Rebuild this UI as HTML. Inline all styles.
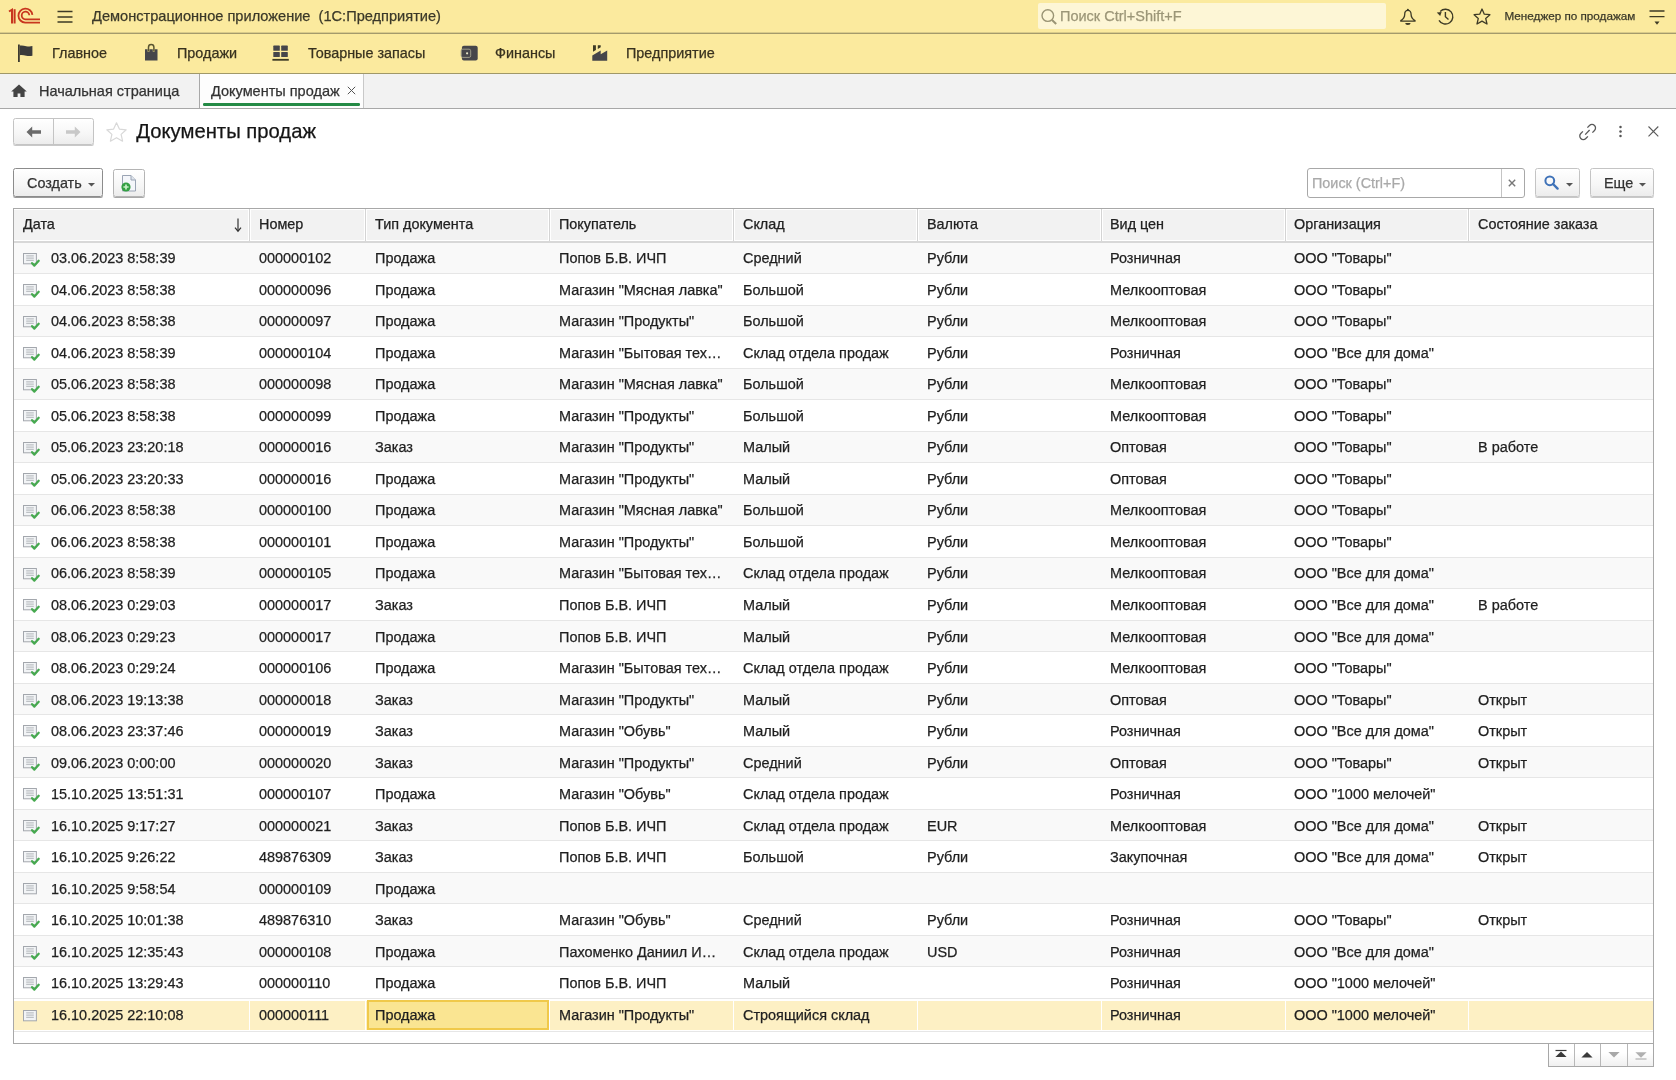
<!DOCTYPE html>
<html><head><meta charset="utf-8">
<style>
*{box-sizing:border-box;margin:0;padding:0}
html,body{width:1676px;height:1080px;overflow:hidden;background:#fff;font-family:"Liberation Sans",sans-serif;color:#333}
#wrap{position:absolute;left:0;top:0;width:1676px;height:1080px;will-change:transform}
.abs{position:absolute}
#top{position:absolute;left:0;top:0;width:1676px;height:34px;background:#fbea9e;border-bottom:1px solid #a39a6c;box-shadow:inset 0 -1px 0 #d9cb8a}
#sect{position:absolute;left:0;top:34px;width:1676px;height:40px;background:#fbea9e;border-bottom:1px solid #a09868}
#tabs{position:absolute;left:0;top:74px;width:1676px;height:35px;background:#f2f2f2;border-bottom:1px solid #a8a8a8}
.lbl{position:absolute;white-space:nowrap;line-height:20px}
.sec{font-size:14.4px;color:#38321f;top:9px}
.tab{font-size:14.5px;color:#333}
svg{position:absolute;overflow:visible}
#title{position:absolute;left:136.3px;top:118px;font-size:20.25px;color:#151515;line-height:26px;white-space:nowrap}
.btn{position:absolute;border:1px solid #b8b8b8;border-radius:2.5px;background:linear-gradient(#fff,#f6f6f6 60%,#ececec);box-shadow:0 1px 0 #c8c8c8}
#grid{position:absolute;left:13px;top:208px;width:1641px;height:836px;border:1px solid #a8a8a8;overflow:hidden;background:#fff}
.hbg{position:absolute;left:0;top:0;width:1640px;height:34px;background:#f2f2f2;border-top:1px solid #fff;border-bottom:2px solid #d8d8d8;box-shadow:inset 0 -1px 0 #fff}
.hdiv{position:absolute;top:0;width:3px;height:32px;background:#d4d4d4;border-left:1px solid #fff;border-right:1px solid #fff}
.ht{position:absolute;top:-1px;line-height:32px;font-size:14.4px;color:#222;white-space:nowrap}
.sortarr{position:absolute;top:-1px;line-height:32px;font-size:15px;color:#444}
.row{position:absolute;left:0;width:1640px;height:31.52px;border-bottom:1px solid #e6e6e6;background:#fff}
.row.odd{background:#f9f9f9}
.row.sel{background:#fff;height:32.6px}
.sc{position:absolute;top:2px;height:28.6px;background:#fdf0c4}
.sel .t{top:1.4px}
.sel .di{top:11px!important}
.selcell{position:absolute;top:1.5px;height:29.8px;background:#fae592;border:2px solid #f0c94a}
.t{position:absolute;top:0.8px;line-height:31px;font-size:14.45px;color:#1f1f1f;white-space:nowrap}
.lbl,#title,.t,.ht{-webkit-text-stroke:0.25px currentColor}
.di{position:absolute}
</style></head><body><div id="wrap">
<div id="top">
  <svg style="left:8px;top:8px" width="34" height="17" viewBox="0 0 34 17">
    <path d="M1 3.5l3-1.8v13.8" fill="none" stroke="#c8361e" stroke-width="2"/>
    <path d="M6.6 1.2v14.3" fill="none" stroke="#c8361e" stroke-width="2"/>
    <path d="M32 14.6H17.2A7 7 0 1 1 24.4 6.9" fill="none" stroke="#c8361e" stroke-width="1.8"/>
    <path d="M32 11.3H17.4A3.8 3.8 0 1 1 21.3 7.2" fill="none" stroke="#c8361e" stroke-width="1.8"/>
  </svg>
  <svg style="left:57px;top:10px" width="16" height="13" viewBox="0 0 16 13">
    <path d="M0.5 1.4h15M0.5 6.9h15M0.5 12h15" stroke="#3d3a25" stroke-width="1.5"/>
  </svg>
  <span class="lbl" style="left:92px;top:6px;font-size:14.6px;color:#3b3929">Демонстрационное приложение&nbsp; (1С:Предприятие)</span>
  <div class="abs" style="left:1038px;top:3px;width:348px;height:26px;background:#fdf6d6;border-radius:2px"></div>
  <svg style="left:1041px;top:9px" width="17" height="16" viewBox="0 0 17 16">
    <circle cx="6.8" cy="6.6" r="5.8" fill="none" stroke="#9a9474" stroke-width="1.4"/>
    <path d="M11 11l4.2 4" stroke="#9a9474" stroke-width="2"/>
  </svg>
  <span class="lbl" style="left:1060px;top:6px;font-size:14.5px;color:#9c9678">Поиск Ctrl+Shift+F</span>
  <svg style="left:1400px;top:8px" width="16" height="18" viewBox="0 0 16 18">
    <path d="M7.9 2.4C5.7 2.4 4.7 4.2 4.7 6.4c0 3-1.4 4.6-3.9 6.2v.6h14.2v-.6c-2.5-1.6-3.9-3.2-3.9-6.2 0-2.2-1-4-3.2-4z" fill="none" stroke="#3d3a25" stroke-width="1.3" stroke-linejoin="round"/>
    <circle cx="7.9" cy="1.8" r="1" fill="#3d3a25"/>
    <path d="M5.2 14.9h5.4a2.7 2 0 0 1-5.4 0z" fill="#3d3a25"/>
  </svg>
  <svg style="left:1436px;top:8px" width="19" height="18" viewBox="1436 8 19 18">
    <path d="M1440.2 11.4A7.4 7.4 0 1 1 1439 20.3" fill="none" stroke="#3d3a25" stroke-width="1.4"/>
    <path d="M1436.8 12.6l4.8-.6-1.4 4z" fill="#3d3a25"/>
    <path d="M1445.4 12.1v4.6l3.1 2.9" fill="none" stroke="#3d3a25" stroke-width="1.4"/>
  </svg>
  <svg style="left:1473px;top:8px" width="18" height="18" viewBox="0 0 18 18">
    <path d="M9 1l2.3 5.2 5.6.5-4.2 3.7 1.3 5.6L9 13.1 4 16l1.3-5.6L1.1 6.7l5.6-.5z" fill="none" stroke="#3d3a25" stroke-width="1.3" stroke-linejoin="round"/>
  </svg>
  <span class="lbl" style="left:1504.5px;top:6px;font-size:11.7px;color:#3b3929">Менеджер по продажам</span>
  <svg style="left:1649px;top:10px" width="17" height="16" viewBox="0 0 17 16">
    <path d="M0.5 1h15M0.5 6.6h15" stroke="#3d3a25" stroke-width="1.3"/>
    <path d="M5.5 11.4h5l-2.5 3.4z" fill="#3d3a25"/>
  </svg>
</div>
<div id="sect">
  <svg style="left:0;top:0" width="640" height="40" viewBox="0 34 640 40">
    <path d="M18.9 44.6v17.4" stroke="#3d3a30" stroke-width="1.8"/>
    <path d="M19.9 45.6c2.2-.5 4.3.2 6.3.6s4 .6 6.2-.1v9.6c-2.2.6-4.2.5-6.2.1s-4.1-1-6.3-.6z" fill="#3b3b3b"/>
    <path d="M145 49.3h2.6v2.4h1.8v-2.4h3.4v2.4h1.8v-2.4h2.9v11.3h-12.5z" fill="#45454a"/>
    <path d="M148.5 51.5v-4.3a2.7 2.7 0 0 1 5.4 0v4.3" fill="none" stroke="#5a5530" stroke-width="1.5"/>
    <rect x="273.3" y="45.6" width="6.5" height="5.2" rx="0.6" fill="#45454a"/>
    <rect x="281.2" y="45.6" width="6.6" height="5.2" rx="0.6" fill="#45454a"/>
    <rect x="273.3" y="52" width="6.5" height="5.1" rx="0.6" fill="#45454a"/>
    <rect x="281.2" y="52" width="6.6" height="5.1" rx="0.6" fill="#45454a"/>
    <rect x="272.4" y="58.9" width="16.4" height="1.8" fill="#3d3a25"/>
    <rect x="461.9" y="45.8" width="15.8" height="14.8" rx="2" fill="#46464a"/>
    <rect x="461.2" y="49.2" width="9.5" height="8.2" rx="1.6" fill="#46464a" stroke="#9c9a88" stroke-width="1"/>
    <circle cx="467.1" cy="53.3" r="1.1" fill="#e8e6c8"/>
    <path d="M593 45.3h2.9v4.6l-2.9 1.8zM597.8 45.3h2.9v1.9l-2.9 1.8z" fill="#3d3a25"/>
    <path d="M592.3 60.7V55.4l8.4-4.8v3.6l6.5-3.6v10.1z" fill="#45454a"/>
  </svg>
  <span class="lbl sec" style="left:52px">Главное</span>
  <span class="lbl sec" style="left:177px">Продажи</span>
  <span class="lbl sec" style="left:308px">Товарные запасы</span>
  <span class="lbl sec" style="left:495px">Финансы</span>
  <span class="lbl sec" style="left:626px">Предприятие</span>
</div>
<div id="tabs">
  <svg style="left:11px;top:10px" width="16" height="14" viewBox="0 0 16 14">
    <path d="M8 0.5L0.2 7.4h2.2V13h4.2V9.4h2.8V13h4.2V7.4h2.2z" fill="#444"/>
  </svg>
  <span class="lbl tab" style="left:39px;top:7px">Начальная страница</span>
  <div class="abs" style="left:199px;top:0;width:165px;height:34px;background:#fdfdfd;border-left:1px solid #a8a8a8;border-right:1px solid #c8c8c8"></div>
  <div class="abs" style="left:203px;top:29px;width:157px;height:2.6px;background:#248a45;border-radius:1.3px"></div>
  <span class="lbl tab" style="left:211px;top:7px">Документы продаж</span>
  <svg style="left:347px;top:86px;top:12px" width="9" height="9" viewBox="0 0 9 9">
    <path d="M0.8 0.8l7.4 7.4M8.2 0.8l-7.4 7.4" stroke="#555" stroke-width="1"/>
  </svg>
</div>

<!-- nav buttons -->
<div class="btn" style="left:13px;top:118px;width:81px;height:27px;border-color:#c4c4c4"></div>
<div class="abs" style="left:53px;top:119px;width:1px;height:26px;background:#c4c4c4"></div>
<svg style="left:26px;top:126px" width="16" height="12" viewBox="0 0 16 12">
  <path d="M0.5 6L6.2 0.6v3.6H15v3.6H6.2v3.6z" fill="#6a6a6a"/>
</svg>
<svg style="left:65px;top:126px" width="16" height="12" viewBox="0 0 16 12">
  <path d="M15.5 6L9.8 0.6v3.6H1v3.6h8.8v3.6z" fill="#c8c8c8"/>
</svg>
<svg style="left:106px;top:122px" width="21" height="20" viewBox="0 0 21 20">
  <path d="M10.5 0.8l2.9 6.3 6.8.7-5.1 4.6 1.5 6.8-6.1-3.5-6.1 3.5 1.5-6.8L0.8 7.8l6.8-.7z" fill="none" stroke="#d8d8d8" stroke-width="1.2" stroke-linejoin="round"/>
</svg>
<div id="title">Документы продаж</div>
<svg style="left:1576px;top:120px" width="24" height="24" viewBox="1576 120 24 24">
  <path d="M1587.4 127.6L1589.5 125.5A3.5 3.5 0 0 1 1594.5 130.5L1592.4 132.6M1582.9 131.4L1580.8 133.5A3.5 3.5 0 0 0 1585.8 138.5L1587.9 136.4M1585.2 134.6L1589.6 130" fill="none" stroke="#5a5a5a" stroke-width="1.3"/>
</svg>
<svg style="left:1618px;top:125px" width="5" height="13" viewBox="0 0 5 13">
  <circle cx="2.5" cy="2.1" r="1.25" fill="#555"/><circle cx="2.5" cy="6.5" r="1.25" fill="#555"/><circle cx="2.5" cy="11" r="1.25" fill="#555"/>
</svg>
<svg style="left:1648px;top:126px" width="11" height="11" viewBox="0 0 11 11">
  <path d="M0.5 0.5l9.8 9.8M10.3 0.5l-9.8 9.8" stroke="#5a5a5a" stroke-width="1.1"/>
</svg>

<!-- toolbar -->
<div class="btn" style="left:13px;top:168px;width:90px;height:29px;border-color:#8c8c8c;box-shadow:0 1px 0 #9a9a9a"></div>
<span class="lbl" style="left:27px;top:173px;font-size:14.4px;color:#333">Создать</span>
<svg style="left:88px;top:183px" width="7" height="4" viewBox="0 0 7 4"><path d="M0 0h7L3.5 3.6z" fill="#555"/></svg>
<div class="btn" style="left:113px;top:168.5px;width:32px;height:28.5px;border-color:#b4b4b4;box-shadow:0 1px 0 #a8a8a8"></div>
<svg style="left:121px;top:175px" width="16" height="17" viewBox="0 0 16 17">
  <path d="M1.5 0.5h8.5l4.5 4.5v11H1.5z" fill="#f4f6fa" stroke="#9aa4b4" stroke-width="1"/>
  <path d="M10 0.5v4.5h4.5" fill="#dfe4ec" stroke="#9aa4b4" stroke-width="1"/>
  <circle cx="5" cy="12" r="4.6" fill="#34a043"/>
  <path d="M5 9.4v5.2M2.4 12h5.2" stroke="#c8f0c8" stroke-width="1.7"/>
</svg>

<div class="abs" style="left:1307px;top:168px;width:218px;height:30px;border:1px solid #a8a8a8;border-radius:3px;background:#fff"></div>
<div class="abs" style="left:1501px;top:169px;width:1px;height:28px;background:#c4c4c4"></div>
<span class="lbl" style="left:1312px;top:173px;font-size:14.4px;color:#a9a9a9">Поиск (Ctrl+F)</span>
<svg style="left:1508px;top:179px" width="8" height="8" viewBox="0 0 8 8"><path d="M0.8 0.8l6.4 6.4M7.2 0.8L0.8 7.2" stroke="#777" stroke-width="1.4"/></svg>
<div class="btn" style="left:1535px;top:168px;width:45px;height:29px;border-color:#c4c4c4"></div>
<svg style="left:1544px;top:175px" width="15" height="15" viewBox="0 0 15 15">
  <circle cx="5.8" cy="5.8" r="4.4" fill="none" stroke="#3f72b8" stroke-width="2"/>
  <path d="M9 9l4.6 4.6" stroke="#3f72b8" stroke-width="2.4" stroke-linecap="round"/>
</svg>
<svg style="left:1566px;top:183px" width="7" height="4" viewBox="0 0 7 4"><path d="M0 0h7L3.5 3.6z" fill="#555"/></svg>
<div class="btn" style="left:1590px;top:168px;width:64px;height:29px;border-color:#c4c4c4"></div>
<span class="lbl" style="left:1604px;top:173px;font-size:14.4px;color:#333">Еще</span>
<svg style="left:1639px;top:183px" width="7" height="4" viewBox="0 0 7 4"><path d="M0 0h7L3.5 3.6z" fill="#555"/></svg>

<div id="grid">
<div class="hbg"></div><div class="hdiv" style="left:234px"></div><div class="hdiv" style="left:350px"></div><div class="hdiv" style="left:534px"></div><div class="hdiv" style="left:718px"></div><div class="hdiv" style="left:902px"></div><div class="hdiv" style="left:1086px"></div><div class="hdiv" style="left:1270px"></div><div class="hdiv" style="left:1453px"></div><span class="ht" style="left:9px">Дата</span><span class="ht" style="left:245px">Номер</span><span class="ht" style="left:361px">Тип документа</span><span class="ht" style="left:545px">Покупатель</span><span class="ht" style="left:729px">Склад</span><span class="ht" style="left:913px">Валюта</span><span class="ht" style="left:1096px">Вид цен</span><span class="ht" style="left:1280px">Организация</span><span class="ht" style="left:1464px">Состояние заказа</span><svg style="left:220px;top:8.5px" width="8" height="15" viewBox="0 0 8 15"><path d="M4 0.5v12.5" stroke="#333" stroke-width="1.2"/><path d="M1 9.6L4 13.2 7 9.6" fill="none" stroke="#333" stroke-width="1.2"/></svg>
<div class="row odd" style="top:33.50px"><svg class="di" style="left:9px;top:10px" width="18" height="15" viewBox="0 0 18 15"><rect x="0.5" y="0.5" width="12.9" height="10.3" fill="#f2f4f6" stroke="#a3a7ad" stroke-width="1"/><path d="M3.2 2.9h7.6M3.2 5.1h7.6M3.2 7.3h7.6" stroke="#b0b4b9" stroke-width="1"/><path d="M9.1 10.2l2.3 2.4 4.3-4.8" fill="none" stroke="#46a94f" stroke-width="2.3" stroke-linecap="round" stroke-linejoin="round"/></svg><span class="t" style="left:37px">03.06.2023 8:58:39</span><span class="t" style="left:245px">000000102</span><span class="t" style="left:361px">Продажа</span><span class="t" style="left:545px">Попов Б.В. ИЧП</span><span class="t" style="left:729px">Средний</span><span class="t" style="left:913px">Рубли</span><span class="t" style="left:1096px">Розничная</span><span class="t" style="left:1280px">ООО "Товары"</span></div>
<div class="row" style="top:65.02px"><svg class="di" style="left:9px;top:10px" width="18" height="15" viewBox="0 0 18 15"><rect x="0.5" y="0.5" width="12.9" height="10.3" fill="#f2f4f6" stroke="#a3a7ad" stroke-width="1"/><path d="M3.2 2.9h7.6M3.2 5.1h7.6M3.2 7.3h7.6" stroke="#b0b4b9" stroke-width="1"/><path d="M9.1 10.2l2.3 2.4 4.3-4.8" fill="none" stroke="#46a94f" stroke-width="2.3" stroke-linecap="round" stroke-linejoin="round"/></svg><span class="t" style="left:37px">04.06.2023 8:58:38</span><span class="t" style="left:245px">000000096</span><span class="t" style="left:361px">Продажа</span><span class="t" style="left:545px">Магазин "Мясная лавка"</span><span class="t" style="left:729px">Большой</span><span class="t" style="left:913px">Рубли</span><span class="t" style="left:1096px">Мелкооптовая</span><span class="t" style="left:1280px">ООО "Товары"</span></div>
<div class="row odd" style="top:96.54px"><svg class="di" style="left:9px;top:10px" width="18" height="15" viewBox="0 0 18 15"><rect x="0.5" y="0.5" width="12.9" height="10.3" fill="#f2f4f6" stroke="#a3a7ad" stroke-width="1"/><path d="M3.2 2.9h7.6M3.2 5.1h7.6M3.2 7.3h7.6" stroke="#b0b4b9" stroke-width="1"/><path d="M9.1 10.2l2.3 2.4 4.3-4.8" fill="none" stroke="#46a94f" stroke-width="2.3" stroke-linecap="round" stroke-linejoin="round"/></svg><span class="t" style="left:37px">04.06.2023 8:58:38</span><span class="t" style="left:245px">000000097</span><span class="t" style="left:361px">Продажа</span><span class="t" style="left:545px">Магазин "Продукты"</span><span class="t" style="left:729px">Большой</span><span class="t" style="left:913px">Рубли</span><span class="t" style="left:1096px">Мелкооптовая</span><span class="t" style="left:1280px">ООО "Товары"</span></div>
<div class="row" style="top:128.06px"><svg class="di" style="left:9px;top:10px" width="18" height="15" viewBox="0 0 18 15"><rect x="0.5" y="0.5" width="12.9" height="10.3" fill="#f2f4f6" stroke="#a3a7ad" stroke-width="1"/><path d="M3.2 2.9h7.6M3.2 5.1h7.6M3.2 7.3h7.6" stroke="#b0b4b9" stroke-width="1"/><path d="M9.1 10.2l2.3 2.4 4.3-4.8" fill="none" stroke="#46a94f" stroke-width="2.3" stroke-linecap="round" stroke-linejoin="round"/></svg><span class="t" style="left:37px">04.06.2023 8:58:39</span><span class="t" style="left:245px">000000104</span><span class="t" style="left:361px">Продажа</span><span class="t" style="left:545px">Магазин "Бытовая тех…</span><span class="t" style="left:729px">Склад отдела продаж</span><span class="t" style="left:913px">Рубли</span><span class="t" style="left:1096px">Розничная</span><span class="t" style="left:1280px">ООО "Все для дома"</span></div>
<div class="row odd" style="top:159.58px"><svg class="di" style="left:9px;top:10px" width="18" height="15" viewBox="0 0 18 15"><rect x="0.5" y="0.5" width="12.9" height="10.3" fill="#f2f4f6" stroke="#a3a7ad" stroke-width="1"/><path d="M3.2 2.9h7.6M3.2 5.1h7.6M3.2 7.3h7.6" stroke="#b0b4b9" stroke-width="1"/><path d="M9.1 10.2l2.3 2.4 4.3-4.8" fill="none" stroke="#46a94f" stroke-width="2.3" stroke-linecap="round" stroke-linejoin="round"/></svg><span class="t" style="left:37px">05.06.2023 8:58:38</span><span class="t" style="left:245px">000000098</span><span class="t" style="left:361px">Продажа</span><span class="t" style="left:545px">Магазин "Мясная лавка"</span><span class="t" style="left:729px">Большой</span><span class="t" style="left:913px">Рубли</span><span class="t" style="left:1096px">Мелкооптовая</span><span class="t" style="left:1280px">ООО "Товары"</span></div>
<div class="row" style="top:191.10px"><svg class="di" style="left:9px;top:10px" width="18" height="15" viewBox="0 0 18 15"><rect x="0.5" y="0.5" width="12.9" height="10.3" fill="#f2f4f6" stroke="#a3a7ad" stroke-width="1"/><path d="M3.2 2.9h7.6M3.2 5.1h7.6M3.2 7.3h7.6" stroke="#b0b4b9" stroke-width="1"/><path d="M9.1 10.2l2.3 2.4 4.3-4.8" fill="none" stroke="#46a94f" stroke-width="2.3" stroke-linecap="round" stroke-linejoin="round"/></svg><span class="t" style="left:37px">05.06.2023 8:58:38</span><span class="t" style="left:245px">000000099</span><span class="t" style="left:361px">Продажа</span><span class="t" style="left:545px">Магазин "Продукты"</span><span class="t" style="left:729px">Большой</span><span class="t" style="left:913px">Рубли</span><span class="t" style="left:1096px">Мелкооптовая</span><span class="t" style="left:1280px">ООО "Товары"</span></div>
<div class="row odd" style="top:222.62px"><svg class="di" style="left:9px;top:10px" width="18" height="15" viewBox="0 0 18 15"><rect x="0.5" y="0.5" width="12.9" height="10.3" fill="#f2f4f6" stroke="#a3a7ad" stroke-width="1"/><path d="M3.2 2.9h7.6M3.2 5.1h7.6M3.2 7.3h7.6" stroke="#b0b4b9" stroke-width="1"/><path d="M9.1 10.2l2.3 2.4 4.3-4.8" fill="none" stroke="#46a94f" stroke-width="2.3" stroke-linecap="round" stroke-linejoin="round"/></svg><span class="t" style="left:37px">05.06.2023 23:20:18</span><span class="t" style="left:245px">000000016</span><span class="t" style="left:361px">Заказ</span><span class="t" style="left:545px">Магазин "Продукты"</span><span class="t" style="left:729px">Малый</span><span class="t" style="left:913px">Рубли</span><span class="t" style="left:1096px">Оптовая</span><span class="t" style="left:1280px">ООО "Товары"</span><span class="t" style="left:1464px">В работе</span></div>
<div class="row" style="top:254.14px"><svg class="di" style="left:9px;top:10px" width="18" height="15" viewBox="0 0 18 15"><rect x="0.5" y="0.5" width="12.9" height="10.3" fill="#f2f4f6" stroke="#a3a7ad" stroke-width="1"/><path d="M3.2 2.9h7.6M3.2 5.1h7.6M3.2 7.3h7.6" stroke="#b0b4b9" stroke-width="1"/><path d="M9.1 10.2l2.3 2.4 4.3-4.8" fill="none" stroke="#46a94f" stroke-width="2.3" stroke-linecap="round" stroke-linejoin="round"/></svg><span class="t" style="left:37px">05.06.2023 23:20:33</span><span class="t" style="left:245px">000000016</span><span class="t" style="left:361px">Продажа</span><span class="t" style="left:545px">Магазин "Продукты"</span><span class="t" style="left:729px">Малый</span><span class="t" style="left:913px">Рубли</span><span class="t" style="left:1096px">Оптовая</span><span class="t" style="left:1280px">ООО "Товары"</span></div>
<div class="row odd" style="top:285.66px"><svg class="di" style="left:9px;top:10px" width="18" height="15" viewBox="0 0 18 15"><rect x="0.5" y="0.5" width="12.9" height="10.3" fill="#f2f4f6" stroke="#a3a7ad" stroke-width="1"/><path d="M3.2 2.9h7.6M3.2 5.1h7.6M3.2 7.3h7.6" stroke="#b0b4b9" stroke-width="1"/><path d="M9.1 10.2l2.3 2.4 4.3-4.8" fill="none" stroke="#46a94f" stroke-width="2.3" stroke-linecap="round" stroke-linejoin="round"/></svg><span class="t" style="left:37px">06.06.2023 8:58:38</span><span class="t" style="left:245px">000000100</span><span class="t" style="left:361px">Продажа</span><span class="t" style="left:545px">Магазин "Мясная лавка"</span><span class="t" style="left:729px">Большой</span><span class="t" style="left:913px">Рубли</span><span class="t" style="left:1096px">Мелкооптовая</span><span class="t" style="left:1280px">ООО "Товары"</span></div>
<div class="row" style="top:317.18px"><svg class="di" style="left:9px;top:10px" width="18" height="15" viewBox="0 0 18 15"><rect x="0.5" y="0.5" width="12.9" height="10.3" fill="#f2f4f6" stroke="#a3a7ad" stroke-width="1"/><path d="M3.2 2.9h7.6M3.2 5.1h7.6M3.2 7.3h7.6" stroke="#b0b4b9" stroke-width="1"/><path d="M9.1 10.2l2.3 2.4 4.3-4.8" fill="none" stroke="#46a94f" stroke-width="2.3" stroke-linecap="round" stroke-linejoin="round"/></svg><span class="t" style="left:37px">06.06.2023 8:58:38</span><span class="t" style="left:245px">000000101</span><span class="t" style="left:361px">Продажа</span><span class="t" style="left:545px">Магазин "Продукты"</span><span class="t" style="left:729px">Большой</span><span class="t" style="left:913px">Рубли</span><span class="t" style="left:1096px">Мелкооптовая</span><span class="t" style="left:1280px">ООО "Товары"</span></div>
<div class="row odd" style="top:348.70px"><svg class="di" style="left:9px;top:10px" width="18" height="15" viewBox="0 0 18 15"><rect x="0.5" y="0.5" width="12.9" height="10.3" fill="#f2f4f6" stroke="#a3a7ad" stroke-width="1"/><path d="M3.2 2.9h7.6M3.2 5.1h7.6M3.2 7.3h7.6" stroke="#b0b4b9" stroke-width="1"/><path d="M9.1 10.2l2.3 2.4 4.3-4.8" fill="none" stroke="#46a94f" stroke-width="2.3" stroke-linecap="round" stroke-linejoin="round"/></svg><span class="t" style="left:37px">06.06.2023 8:58:39</span><span class="t" style="left:245px">000000105</span><span class="t" style="left:361px">Продажа</span><span class="t" style="left:545px">Магазин "Бытовая тех…</span><span class="t" style="left:729px">Склад отдела продаж</span><span class="t" style="left:913px">Рубли</span><span class="t" style="left:1096px">Мелкооптовая</span><span class="t" style="left:1280px">ООО "Все для дома"</span></div>
<div class="row" style="top:380.22px"><svg class="di" style="left:9px;top:10px" width="18" height="15" viewBox="0 0 18 15"><rect x="0.5" y="0.5" width="12.9" height="10.3" fill="#f2f4f6" stroke="#a3a7ad" stroke-width="1"/><path d="M3.2 2.9h7.6M3.2 5.1h7.6M3.2 7.3h7.6" stroke="#b0b4b9" stroke-width="1"/><path d="M9.1 10.2l2.3 2.4 4.3-4.8" fill="none" stroke="#46a94f" stroke-width="2.3" stroke-linecap="round" stroke-linejoin="round"/></svg><span class="t" style="left:37px">08.06.2023 0:29:03</span><span class="t" style="left:245px">000000017</span><span class="t" style="left:361px">Заказ</span><span class="t" style="left:545px">Попов Б.В. ИЧП</span><span class="t" style="left:729px">Малый</span><span class="t" style="left:913px">Рубли</span><span class="t" style="left:1096px">Мелкооптовая</span><span class="t" style="left:1280px">ООО "Все для дома"</span><span class="t" style="left:1464px">В работе</span></div>
<div class="row odd" style="top:411.74px"><svg class="di" style="left:9px;top:10px" width="18" height="15" viewBox="0 0 18 15"><rect x="0.5" y="0.5" width="12.9" height="10.3" fill="#f2f4f6" stroke="#a3a7ad" stroke-width="1"/><path d="M3.2 2.9h7.6M3.2 5.1h7.6M3.2 7.3h7.6" stroke="#b0b4b9" stroke-width="1"/><path d="M9.1 10.2l2.3 2.4 4.3-4.8" fill="none" stroke="#46a94f" stroke-width="2.3" stroke-linecap="round" stroke-linejoin="round"/></svg><span class="t" style="left:37px">08.06.2023 0:29:23</span><span class="t" style="left:245px">000000017</span><span class="t" style="left:361px">Продажа</span><span class="t" style="left:545px">Попов Б.В. ИЧП</span><span class="t" style="left:729px">Малый</span><span class="t" style="left:913px">Рубли</span><span class="t" style="left:1096px">Мелкооптовая</span><span class="t" style="left:1280px">ООО "Все для дома"</span></div>
<div class="row" style="top:443.26px"><svg class="di" style="left:9px;top:10px" width="18" height="15" viewBox="0 0 18 15"><rect x="0.5" y="0.5" width="12.9" height="10.3" fill="#f2f4f6" stroke="#a3a7ad" stroke-width="1"/><path d="M3.2 2.9h7.6M3.2 5.1h7.6M3.2 7.3h7.6" stroke="#b0b4b9" stroke-width="1"/><path d="M9.1 10.2l2.3 2.4 4.3-4.8" fill="none" stroke="#46a94f" stroke-width="2.3" stroke-linecap="round" stroke-linejoin="round"/></svg><span class="t" style="left:37px">08.06.2023 0:29:24</span><span class="t" style="left:245px">000000106</span><span class="t" style="left:361px">Продажа</span><span class="t" style="left:545px">Магазин "Бытовая тех…</span><span class="t" style="left:729px">Склад отдела продаж</span><span class="t" style="left:913px">Рубли</span><span class="t" style="left:1096px">Мелкооптовая</span><span class="t" style="left:1280px">ООО "Товары"</span></div>
<div class="row odd" style="top:474.78px"><svg class="di" style="left:9px;top:10px" width="18" height="15" viewBox="0 0 18 15"><rect x="0.5" y="0.5" width="12.9" height="10.3" fill="#f2f4f6" stroke="#a3a7ad" stroke-width="1"/><path d="M3.2 2.9h7.6M3.2 5.1h7.6M3.2 7.3h7.6" stroke="#b0b4b9" stroke-width="1"/><path d="M9.1 10.2l2.3 2.4 4.3-4.8" fill="none" stroke="#46a94f" stroke-width="2.3" stroke-linecap="round" stroke-linejoin="round"/></svg><span class="t" style="left:37px">08.06.2023 19:13:38</span><span class="t" style="left:245px">000000018</span><span class="t" style="left:361px">Заказ</span><span class="t" style="left:545px">Магазин "Продукты"</span><span class="t" style="left:729px">Малый</span><span class="t" style="left:913px">Рубли</span><span class="t" style="left:1096px">Оптовая</span><span class="t" style="left:1280px">ООО "Товары"</span><span class="t" style="left:1464px">Открыт</span></div>
<div class="row" style="top:506.30px"><svg class="di" style="left:9px;top:10px" width="18" height="15" viewBox="0 0 18 15"><rect x="0.5" y="0.5" width="12.9" height="10.3" fill="#f2f4f6" stroke="#a3a7ad" stroke-width="1"/><path d="M3.2 2.9h7.6M3.2 5.1h7.6M3.2 7.3h7.6" stroke="#b0b4b9" stroke-width="1"/><path d="M9.1 10.2l2.3 2.4 4.3-4.8" fill="none" stroke="#46a94f" stroke-width="2.3" stroke-linecap="round" stroke-linejoin="round"/></svg><span class="t" style="left:37px">08.06.2023 23:37:46</span><span class="t" style="left:245px">000000019</span><span class="t" style="left:361px">Заказ</span><span class="t" style="left:545px">Магазин "Обувь"</span><span class="t" style="left:729px">Малый</span><span class="t" style="left:913px">Рубли</span><span class="t" style="left:1096px">Розничная</span><span class="t" style="left:1280px">ООО "Все для дома"</span><span class="t" style="left:1464px">Открыт</span></div>
<div class="row odd" style="top:537.82px"><svg class="di" style="left:9px;top:10px" width="18" height="15" viewBox="0 0 18 15"><rect x="0.5" y="0.5" width="12.9" height="10.3" fill="#f2f4f6" stroke="#a3a7ad" stroke-width="1"/><path d="M3.2 2.9h7.6M3.2 5.1h7.6M3.2 7.3h7.6" stroke="#b0b4b9" stroke-width="1"/><path d="M9.1 10.2l2.3 2.4 4.3-4.8" fill="none" stroke="#46a94f" stroke-width="2.3" stroke-linecap="round" stroke-linejoin="round"/></svg><span class="t" style="left:37px">09.06.2023 0:00:00</span><span class="t" style="left:245px">000000020</span><span class="t" style="left:361px">Заказ</span><span class="t" style="left:545px">Магазин "Продукты"</span><span class="t" style="left:729px">Средний</span><span class="t" style="left:913px">Рубли</span><span class="t" style="left:1096px">Оптовая</span><span class="t" style="left:1280px">ООО "Товары"</span><span class="t" style="left:1464px">Открыт</span></div>
<div class="row" style="top:569.34px"><svg class="di" style="left:9px;top:10px" width="18" height="15" viewBox="0 0 18 15"><rect x="0.5" y="0.5" width="12.9" height="10.3" fill="#f2f4f6" stroke="#a3a7ad" stroke-width="1"/><path d="M3.2 2.9h7.6M3.2 5.1h7.6M3.2 7.3h7.6" stroke="#b0b4b9" stroke-width="1"/><path d="M9.1 10.2l2.3 2.4 4.3-4.8" fill="none" stroke="#46a94f" stroke-width="2.3" stroke-linecap="round" stroke-linejoin="round"/></svg><span class="t" style="left:37px">15.10.2025 13:51:31</span><span class="t" style="left:245px">000000107</span><span class="t" style="left:361px">Продажа</span><span class="t" style="left:545px">Магазин "Обувь"</span><span class="t" style="left:729px">Склад отдела продаж</span><span class="t" style="left:1096px">Розничная</span><span class="t" style="left:1280px">ООО "1000 мелочей"</span></div>
<div class="row odd" style="top:600.86px"><svg class="di" style="left:9px;top:10px" width="18" height="15" viewBox="0 0 18 15"><rect x="0.5" y="0.5" width="12.9" height="10.3" fill="#f2f4f6" stroke="#a3a7ad" stroke-width="1"/><path d="M3.2 2.9h7.6M3.2 5.1h7.6M3.2 7.3h7.6" stroke="#b0b4b9" stroke-width="1"/><path d="M9.1 10.2l2.3 2.4 4.3-4.8" fill="none" stroke="#46a94f" stroke-width="2.3" stroke-linecap="round" stroke-linejoin="round"/></svg><span class="t" style="left:37px">16.10.2025 9:17:27</span><span class="t" style="left:245px">000000021</span><span class="t" style="left:361px">Заказ</span><span class="t" style="left:545px">Попов Б.В. ИЧП</span><span class="t" style="left:729px">Склад отдела продаж</span><span class="t" style="left:913px">EUR</span><span class="t" style="left:1096px">Мелкооптовая</span><span class="t" style="left:1280px">ООО "Все для дома"</span><span class="t" style="left:1464px">Открыт</span></div>
<div class="row" style="top:632.38px"><svg class="di" style="left:9px;top:10px" width="18" height="15" viewBox="0 0 18 15"><rect x="0.5" y="0.5" width="12.9" height="10.3" fill="#f2f4f6" stroke="#a3a7ad" stroke-width="1"/><path d="M3.2 2.9h7.6M3.2 5.1h7.6M3.2 7.3h7.6" stroke="#b0b4b9" stroke-width="1"/><path d="M9.1 10.2l2.3 2.4 4.3-4.8" fill="none" stroke="#46a94f" stroke-width="2.3" stroke-linecap="round" stroke-linejoin="round"/></svg><span class="t" style="left:37px">16.10.2025 9:26:22</span><span class="t" style="left:245px">489876309</span><span class="t" style="left:361px">Заказ</span><span class="t" style="left:545px">Попов Б.В. ИЧП</span><span class="t" style="left:729px">Большой</span><span class="t" style="left:913px">Рубли</span><span class="t" style="left:1096px">Закупочная</span><span class="t" style="left:1280px">ООО "Все для дома"</span><span class="t" style="left:1464px">Открыт</span></div>
<div class="row odd" style="top:663.90px"><svg class="di" style="left:9px;top:10px" width="18" height="15" viewBox="0 0 18 15"><rect x="0.5" y="0.5" width="12.9" height="10.3" fill="#f2f4f6" stroke="#a3a7ad" stroke-width="1"/><path d="M3.2 2.9h7.6M3.2 5.1h7.6M3.2 7.3h7.6" stroke="#b0b4b9" stroke-width="1"/></svg><span class="t" style="left:37px">16.10.2025 9:58:54</span><span class="t" style="left:245px">000000109</span><span class="t" style="left:361px">Продажа</span></div>
<div class="row" style="top:695.42px"><svg class="di" style="left:9px;top:10px" width="18" height="15" viewBox="0 0 18 15"><rect x="0.5" y="0.5" width="12.9" height="10.3" fill="#f2f4f6" stroke="#a3a7ad" stroke-width="1"/><path d="M3.2 2.9h7.6M3.2 5.1h7.6M3.2 7.3h7.6" stroke="#b0b4b9" stroke-width="1"/><path d="M9.1 10.2l2.3 2.4 4.3-4.8" fill="none" stroke="#46a94f" stroke-width="2.3" stroke-linecap="round" stroke-linejoin="round"/></svg><span class="t" style="left:37px">16.10.2025 10:01:38</span><span class="t" style="left:245px">489876310</span><span class="t" style="left:361px">Заказ</span><span class="t" style="left:545px">Магазин "Обувь"</span><span class="t" style="left:729px">Средний</span><span class="t" style="left:913px">Рубли</span><span class="t" style="left:1096px">Розничная</span><span class="t" style="left:1280px">ООО "Товары"</span><span class="t" style="left:1464px">Открыт</span></div>
<div class="row odd" style="top:726.94px"><svg class="di" style="left:9px;top:10px" width="18" height="15" viewBox="0 0 18 15"><rect x="0.5" y="0.5" width="12.9" height="10.3" fill="#f2f4f6" stroke="#a3a7ad" stroke-width="1"/><path d="M3.2 2.9h7.6M3.2 5.1h7.6M3.2 7.3h7.6" stroke="#b0b4b9" stroke-width="1"/><path d="M9.1 10.2l2.3 2.4 4.3-4.8" fill="none" stroke="#46a94f" stroke-width="2.3" stroke-linecap="round" stroke-linejoin="round"/></svg><span class="t" style="left:37px">16.10.2025 12:35:43</span><span class="t" style="left:245px">000000108</span><span class="t" style="left:361px">Продажа</span><span class="t" style="left:545px">Пахоменко Даниил И…</span><span class="t" style="left:729px">Склад отдела продаж</span><span class="t" style="left:913px">USD</span><span class="t" style="left:1096px">Розничная</span><span class="t" style="left:1280px">ООО "Все для дома"</span></div>
<div class="row" style="top:758.46px"><svg class="di" style="left:9px;top:10px" width="18" height="15" viewBox="0 0 18 15"><rect x="0.5" y="0.5" width="12.9" height="10.3" fill="#f2f4f6" stroke="#a3a7ad" stroke-width="1"/><path d="M3.2 2.9h7.6M3.2 5.1h7.6M3.2 7.3h7.6" stroke="#b0b4b9" stroke-width="1"/><path d="M9.1 10.2l2.3 2.4 4.3-4.8" fill="none" stroke="#46a94f" stroke-width="2.3" stroke-linecap="round" stroke-linejoin="round"/></svg><span class="t" style="left:37px">16.10.2025 13:29:43</span><span class="t" style="left:245px">000000110</span><span class="t" style="left:361px">Продажа</span><span class="t" style="left:545px">Попов Б.В. ИЧП</span><span class="t" style="left:729px">Малый</span><span class="t" style="left:1096px">Розничная</span><span class="t" style="left:1280px">ООО "1000 мелочей"</span></div>
<div class="row odd sel" style="top:789.98px"><div class="sc" style="left:0px;width:235px"></div><div class="sc" style="left:236px;width:115px"></div><div class="sc" style="left:352px;width:183px"></div><div class="sc" style="left:536px;width:183px"></div><div class="sc" style="left:720px;width:183px"></div><div class="sc" style="left:904px;width:183px"></div><div class="sc" style="left:1088px;width:183px"></div><div class="sc" style="left:1272px;width:182px"></div><div class="sc" style="left:1455px;width:185px"></div><div class="selcell" style="left:352.6px;width:182.6px"></div><svg class="di" style="left:9px;top:10px" width="18" height="15" viewBox="0 0 18 15"><rect x="0.5" y="0.5" width="12.9" height="10.3" fill="#f2f4f6" stroke="#a3a7ad" stroke-width="1"/><path d="M3.2 2.9h7.6M3.2 5.1h7.6M3.2 7.3h7.6" stroke="#b0b4b9" stroke-width="1"/></svg><span class="t" style="left:37px">16.10.2025 22:10:08</span><span class="t" style="left:245px">000000111</span><span class="t" style="left:361px">Продажа</span><span class="t" style="left:545px">Магазин "Продукты"</span><span class="t" style="left:729px">Строящийся склад</span><span class="t" style="left:1096px">Розничная</span><span class="t" style="left:1280px">ООО "1000 мелочей"</span></div>
</div>

<!-- scroll buttons -->
<div class="abs" style="left:1548px;top:1044px;width:106px;height:23px;border:1px solid #a8a8a8;border-top:none;background:linear-gradient(#fff 40%,#f0f0f0)"></div>
<div class="abs" style="left:1574px;top:1044px;width:1px;height:22px;background:#b8b8b8"></div>
<div class="abs" style="left:1600px;top:1044px;width:1px;height:22px;background:#b8b8b8"></div>
<div class="abs" style="left:1627px;top:1044px;width:1px;height:22px;background:#b8b8b8"></div>
<svg style="left:1555px;top:1050px" width="12" height="8" viewBox="0 0 12 8"><path d="M0.5 0.5h11" stroke="#3a3a3a" stroke-width="1.2"/><path d="M6 1.5L11.6 7H0.4z" fill="#3a3a3a"/></svg>
<svg style="left:1581px;top:1052px" width="12" height="6" viewBox="0 0 12 6"><path d="M6 0L11.6 5.5H0.4z" fill="#3a3a3a"/></svg>
<svg style="left:1608px;top:1052px" width="12" height="6" viewBox="0 0 12 6"><path d="M6 5.5L11.6 0H0.4z" fill="#a8a8a8"/></svg>
<svg style="left:1635px;top:1052px" width="12" height="8" viewBox="0 0 12 8"><path d="M0.5 7h11" stroke="#b0b0b0" stroke-width="1.2"/><path d="M6 5.8L11.6 0.2H0.4z" fill="#b0b0b0"/></svg>
</div></body></html>
